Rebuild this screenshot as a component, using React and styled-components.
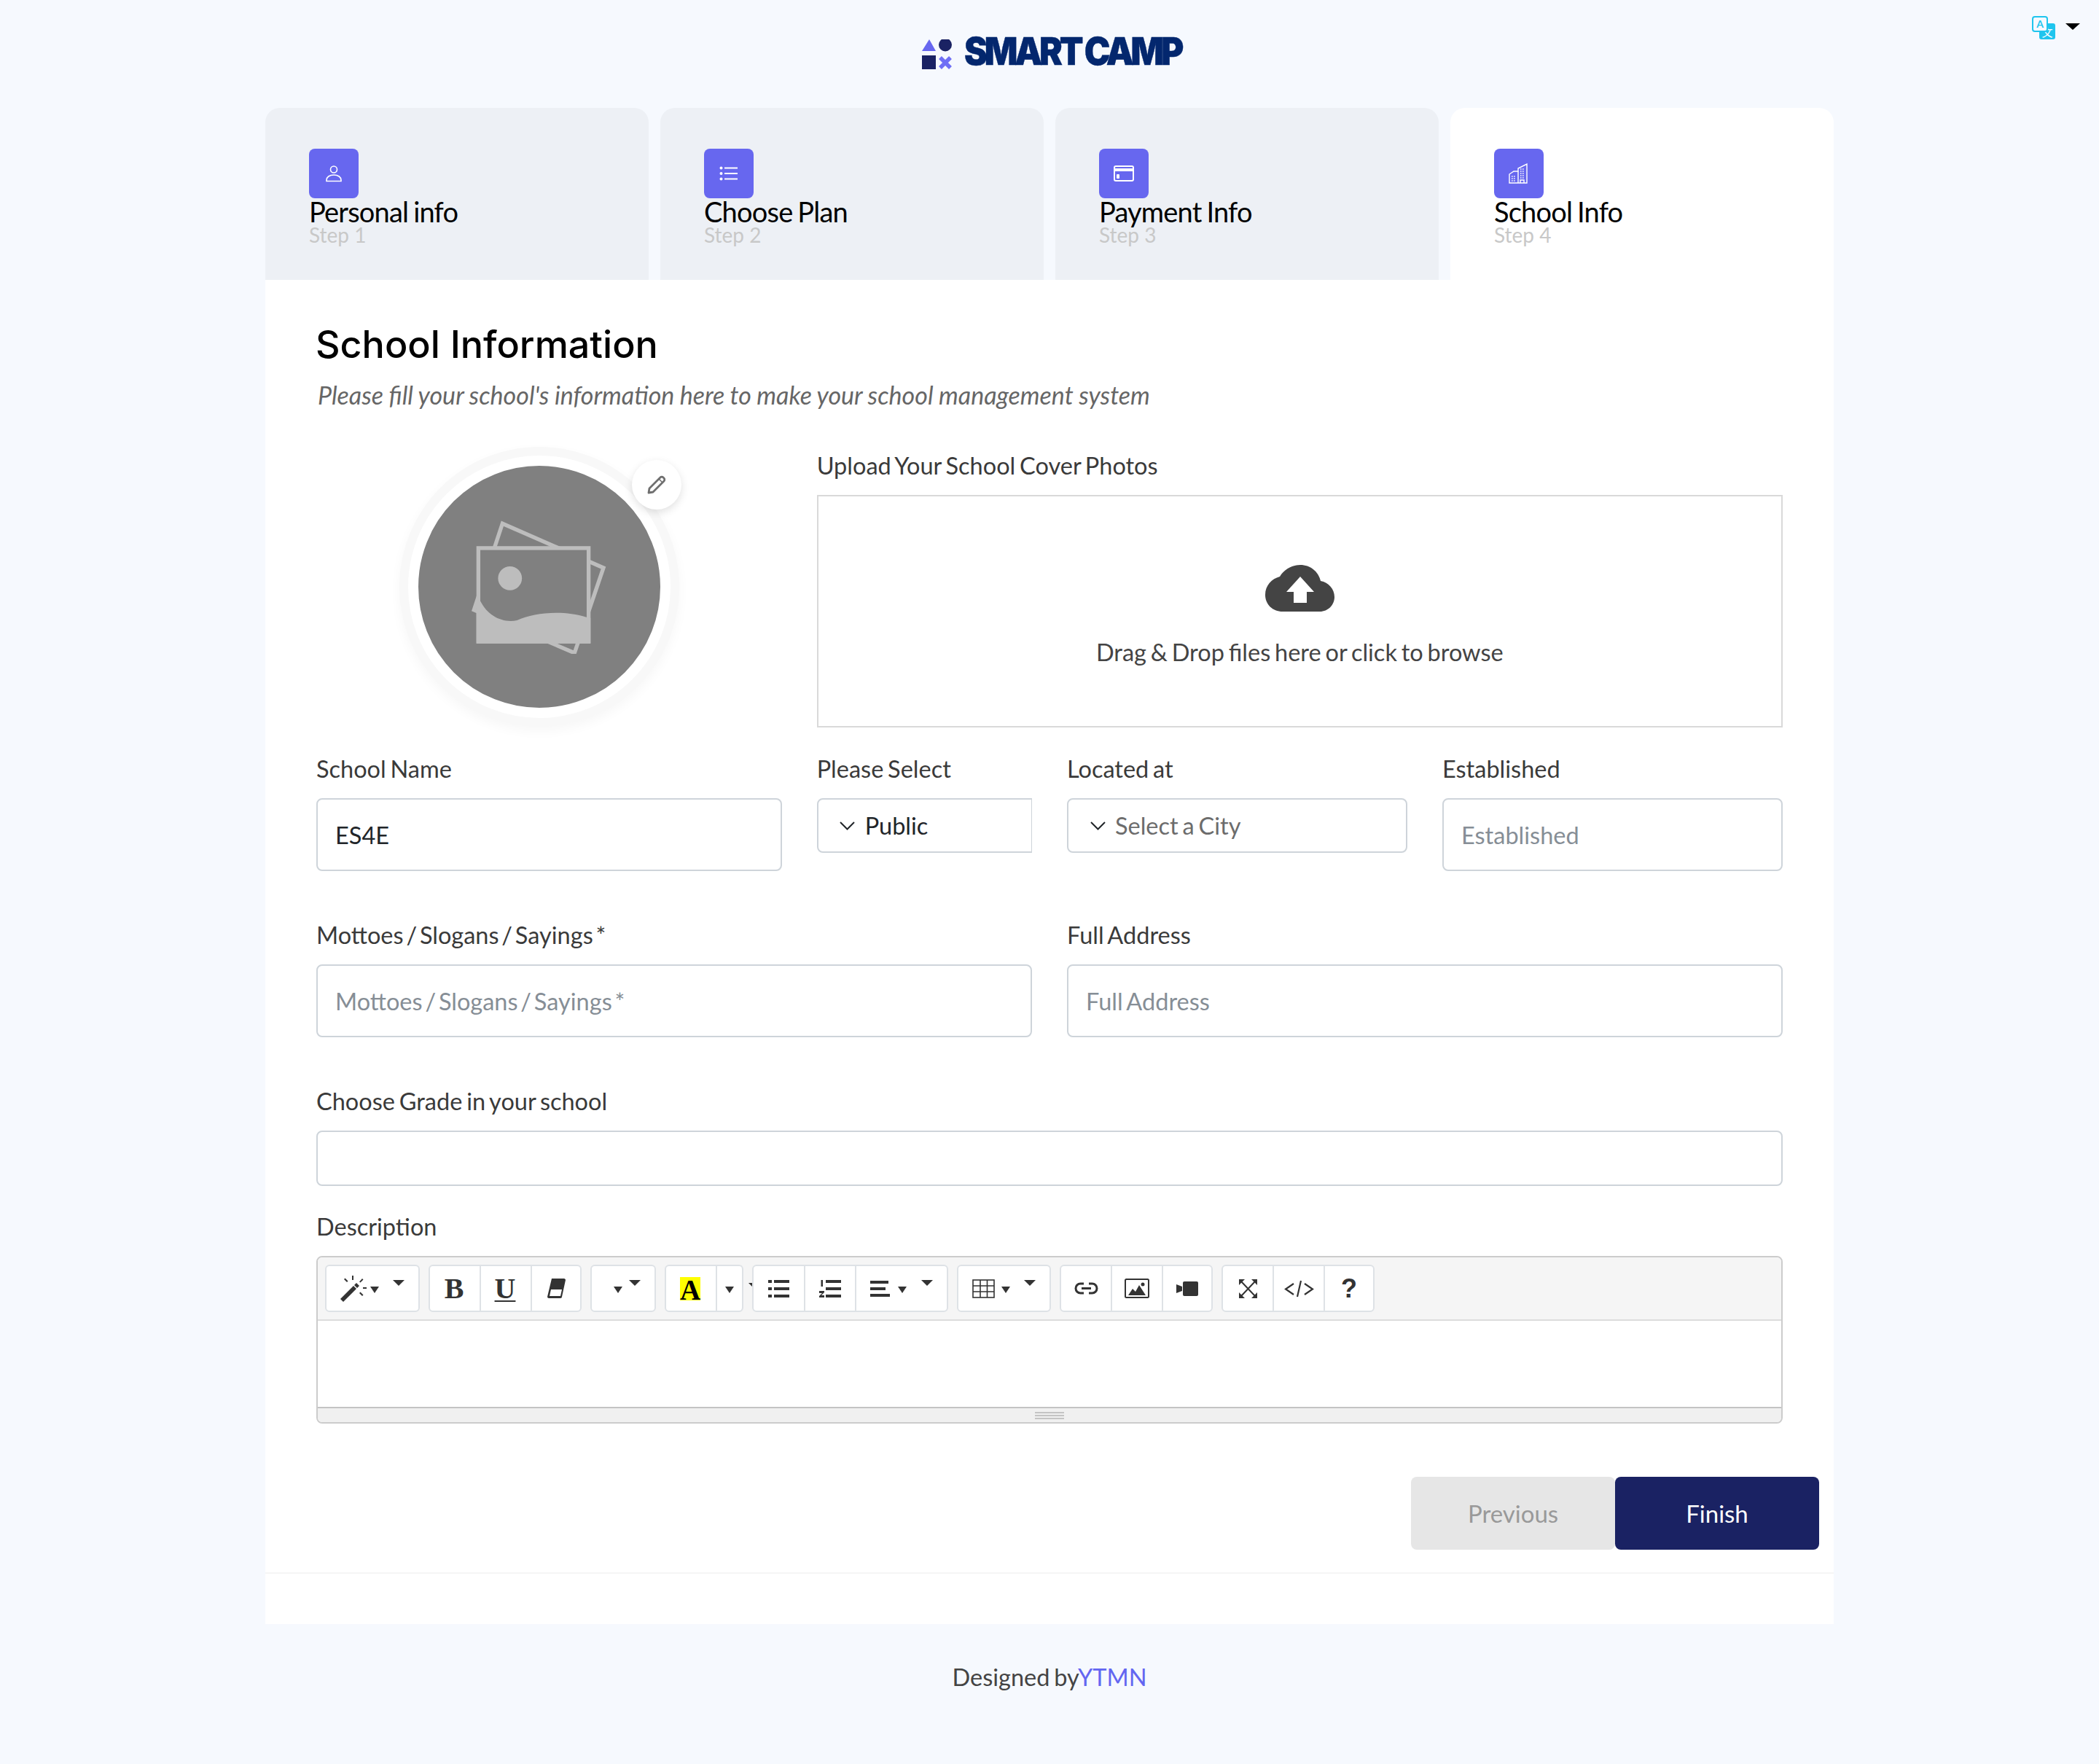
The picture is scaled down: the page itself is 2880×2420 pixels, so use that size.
import React from "react";
import styled, { createGlobalStyle } from "styled-components";

const Global = createGlobalStyle`
  html, body { margin: 0; padding: 0; background: #f6f9fe; }
  body { font-family: "Lato", "Liberation Sans", sans-serif; color: #333; }
  * { box-sizing: border-box; }
  input::placeholder { color: #868e96; opacity: 1; }
`;

const Page = styled.div`
  position: relative;
  width: 2880px;
  height: 2420px;
`;
const Header = styled.header`
  height: 148px;
  display: flex;
  justify-content: center;
  padding-top: 48px;
`;
const Logo = styled.div`
  display: flex;
  align-items: flex-start;
  gap: 16px;
`;
const LogoMark = styled.svg`
  width: 42px;
  height: 42px;
  margin-top: 6px;
`;
const LogoText = styled.span`
  font-family: "Inter", sans-serif;
  font-weight: 900;
  font-size: 52px;
  line-height: 46px;
  letter-spacing: -4.5px;
  color: #03276e;
  white-space: nowrap;
  transform: scaleX(0.918);
  transform-origin: left center;
  margin-right: -32px;
  -webkit-text-stroke: 0.4px #03276e;
`;
const LangSwitch = styled.div`
  position: absolute;
  top: 22px;
  right: 26px;
  display: flex;
  align-items: flex-start;
  gap: 14px;
`;
const LangCaret = styled.span`
  margin-top: 10px;
  border-left: 10px solid transparent;
  border-right: 10px solid transparent;
  border-top: 9px solid #000;
`;
const Shell = styled.main`
  width: 2152px;
  margin: 0 auto;
`;
const Tabs = styled.nav`
  display: grid;
  grid-template-columns: repeat(4, 1fr);
  gap: 16px;
`;
const Tab = styled.div`
  height: 236px;
  padding: 56px 0 0 60px;
  border-radius: 20px 20px 0 0;
  background: ${(p) => (p.$active ? "#fff" : "#edf0f5")};
`;
const TabIcon = styled.div`
  width: 68px;
  height: 68px;
  border-radius: 8px;
  background: #6767ef;
  display: flex;
  align-items: center;
  justify-content: center;
`;
const TabTitle = styled.div`
  font-size: 38px;
  line-height: 34px;
  margin-top: 1px;
  color: #000;
  letter-spacing: -0.8px;
  word-spacing: -2px;
`;
const TabStep = styled.div`
  font-size: 28px;
  line-height: 30px;
  color: #c8c8c8;
`;
const Card = styled.section`
  background: #fff;
  height: 1844px;
  padding-top: 61px;
`;
const FormBody = styled.div`
  padding: 0 70px;
`;
const Heading = styled.h1`
  margin: 0 0 0 -1px;
  font-family: "Inter", sans-serif;
  font-size: 52px;
  line-height: 56px;
  font-weight: 500;
  color: #000;
`;
const Sub = styled.p`
  margin: 19px 0 0;
  font-size: 34px;
  line-height: 44px;
  font-style: italic;
  color: #666;
  padding-left: 2px;
  word-spacing: -0.5px;
`;
const Row = styled.div`
  display: grid;
  grid-template-columns: repeat(12, 1fr);
  column-gap: 48px;
  margin-top: ${(p) => p.$top}px;
  align-items: start;
`;
const Col = styled.div`
  grid-column: span ${(p) => p.$span};
  min-width: 0;
`;
const Label = styled.label`
  display: block;
  font-size: 32.5px;
  word-spacing: ${(p) => (p.$tight ? -4.5 : -2.5)}px;
  line-height: 40px;
  margin-bottom: 20px;
  color: #3a3a3a;
  white-space: nowrap;
`;
const Input = styled.input`
  display: block;
  width: 100%;
  height: ${(p) => p.$h || 100}px;
  padding: 0 24px;
  border: 2px solid #ced4da;
  border-radius: 8px;
  background: #fff;
  font-family: inherit;
  font-size: 32.5px;
  word-spacing: ${(p) => (p.$tight ? -4.5 : -2.5)}px;
  color: #212529;
  outline: none;
`;
const Select = styled.div`
  height: 75px;
  display: flex;
  align-items: center;
  gap: ${(p) => (p.$muted ? 13 : 14)}px;
  padding-left: ${(p) => (p.$muted ? 30 : 29)}px;
  border: 2px solid #ced4da;
  border-right-width: ${(p) => (p.$clipped ? 1 : 2)}px;
  border-radius: ${(p) => (p.$clipped ? "8px 0 0 8px" : "8px")};
  font-size: 32.5px;
  word-spacing: -2.5px;
  color: ${(p) => (p.$muted ? "#6c6c6c" : "#212529")};
`;
const AvatarWrap = styled.div`
  display: flex;
  justify-content: center;
  padding-top: 7px;
  margin-left: -27px;
`;
const Avatar = styled.div`
  position: relative;
  width: 360px;
  height: 360px;
  margin-top: -1px;
  border-radius: 50%;
  background: #808080;
  border: 14px solid #fff;
  box-shadow: 0 0 0 12px #f8f8f8, 0 6px 16px 12px rgba(0, 0, 0, 0.035);
  display: flex;
  align-items: center;
  justify-content: center;
`;
const EditButton = styled.button`
  position: absolute;
  top: -8px;
  right: -29px;
  width: 68px;
  height: 68px;
  padding: 0;
  border: 0;
  border-radius: 50%;
  background: #fff;
  box-shadow: 0 4px 12px rgba(0, 0, 0, 0.12);
  display: flex;
  align-items: center;
  justify-content: center;
`;
const Drop = styled.div`
  height: 319px;
  border: 2px solid #d9d9d9;
  display: flex;
  flex-direction: column;
  align-items: center;
  padding-top: 94px;
`;
const DropText = styled.div`
  margin-top: 34px;
  font-size: 32.5px;
  word-spacing: -2.5px;
  line-height: 44px;
  color: #444;
`;
const Editor = styled.div`
  height: 230px;
  border: 2px solid #ccc;
  border-radius: 8px;
  overflow: hidden;
  display: flex;
  flex-direction: column;
`;
const Toolbar = styled.div`
  height: 87px;
  flex: none;
  background: #f5f5f5;
  border-bottom: 2px solid #dcdcdc;
  display: flex;
  gap: 12px;
  padding: 10px 0 0 10px;
  align-items: flex-start;
`;
const ToolGroup = styled.div`
  position: relative;
  z-index: ${(p) => p.$z || 0};
  height: 65px;
  display: flex;
  background: #fff;
  border: 2px solid #dee2e6;
  border-radius: 6px;
`;
const Tool = styled.div`
  width: ${(p) => p.$w}px;
  height: 100%;
  display: flex;
  align-items: center;
  justify-content: center;
  gap: ${(p) => p.$gap ?? 8}px;
  padding-left: ${(p) => p.$pl || 0}px;
  color: #333;
  & + & { border-left: 2px solid #dee2e6; }
`;
const SmallCaret = styled.span`
  flex: none;
  margin-top: 4px;
  margin-left: ${(p) => p.$ml || 0}px;
  border-left: 6.5px solid transparent;
  border-right: 6.5px solid transparent;
  border-top: 9px solid #333;
`;
const BigCaret = styled.span`
  flex: none;
  margin-bottom: 16px;
  margin-left: ${(p) => p.$ml || 0}px;
  border-left: 8.5px solid transparent;
  border-right: 8.5px solid transparent;
  border-top: 8px solid #333;
`;
const StrayCaret = styled(BigCaret)`
  position: absolute;
  top: 23px;
  right: -25px;
  margin: 0;
`;
const BoldLetter = styled.span`
  font-family: "Liberation Serif", serif;
  font-weight: 700;
  font-size: 40px;
  line-height: 1;
  color: #333;
  margin-right: 2px;
  text-decoration: ${(p) => (p.$underline ? "underline" : "none")};
  text-decoration-thickness: 2px;
  text-underline-offset: 3px;
`;
const Highlight = styled.span`
  width: 28px;
  height: 32px;
  margin-right: 2px;
  background: #ff0;
  font-family: "Liberation Serif", serif;
  font-weight: 700;
  font-size: 39px;
  line-height: 36px;
  color: #000;
  display: flex;
  justify-content: center;
`;
const Help = styled.span`
  font-family: "Liberation Sans", sans-serif;
  font-weight: 700;
  font-size: 36px;
  color: #333;
`;
const EditArea = styled.div`
  flex: 1;
  background: #fff;
`;
const Status = styled.div`
  height: 21px;
  flex: none;
  background: #f0f0f0;
  border-top: 2px solid #c4c4c4;
  display: flex;
  align-items: center;
  justify-content: center;
`;
const Grip = styled.div`
  width: 40px;
  height: 10px;
  border-top: 2px solid #c4c4c4;
  border-bottom: 2px solid #c4c4c4;
  position: relative;
  &::after {
    content: "";
    position: absolute;
    left: 0;
    right: 0;
    top: 2px;
    height: 2px;
    background: #c4c4c4;
  }
`;
const Actions = styled.div`
  display: flex;
  justify-content: flex-end;
  margin-top: 73px;
  padding-right: 20px;
`;
const ActionButton = styled.button`
  width: 280px;
  height: 100px;
  border: 0;
  border-radius: 8px;
  font-family: inherit;
  font-size: 33px;
  background: ${(p) => (p.$primary ? "#1a2263" : "#e6e6e6")};
  color: ${(p) => (p.$primary ? "#fff" : "#999")};
`;
const CardFoot = styled.div`
  margin-top: 31px;
  border-top: 2px solid #f5f5f5;
`;
const Footer = styled.footer`
  margin-top: 50px;
  text-align: center;
  font-size: 32.5px;
  word-spacing: -2.5px;
  line-height: 46px;
  color: #444;
`;
const FooterLink = styled.span`
  color: #6366f1;
`;

const StepPerson = () => (
  <svg width="24" height="24" viewBox="0 0 24 24" fill="none" stroke="#fff" strokeWidth="1.6">
    <circle cx="12" cy="6.500" r="4.500" />
    <path d="M2 22.500v-1.500c0-4 4-7 10-7s10 3 10 7v1.500z" />
  </svg>
);
const StepList = () => (
  <svg width="26" height="20" viewBox="0 0 26 20" fill="#fff">
    <circle cx="2.500" cy="2.500" r="2" /><circle cx="2.500" cy="10" r="2" /><circle cx="2.500" cy="17.500" r="2" />
    <rect x="7" y="1.500" width="18" height="2" /><rect x="7" y="9" width="18" height="2" /><rect x="7" y="16.500" width="18" height="2" />
  </svg>
);
const StepCard = () => (
  <svg width="28" height="22" viewBox="0 0 28 22" fill="none">
    <rect x="1" y="1" width="26" height="20" rx="2" stroke="#fff" strokeWidth="2" />
    <rect x="1" y="4" width="26" height="4" fill="#fff" />
    <rect x="4" y="12" width="4" height="6" rx="1" fill="#fff" />
  </svg>
);
const StepBuilding = () => (
  <svg width="28" height="28" viewBox="0 0 28 28" fill="none" stroke="#fff" strokeWidth="1.4">
    <path d="M1 27V15l6-4h6V7l12-6v26z" />
    <path d="M4 18h6M4 21h6M4 24h6M16 8h6M16 11h6M16 14h6M16 17h6M16 20h6" strokeDasharray="1.6 1.4" />
    <path d="M13 27V11M16 27v-4h5v4" />
  </svg>
);
const Chevron = () => (
  <svg width="21" height="12" viewBox="0 0 21 12" fill="none" stroke="#212529" strokeWidth="2">
    <path d="M1 1l9.500 9.500L20 1" />
  </svg>
);
const Cloud = () => (
  <svg width="95" height="64" viewBox="0 0 95 64">
    <path fill="#444" d="M24 64C10 64 0 54 0 41C0 28 9 19 20 16C26 6 37 0 48 0C62 0 73 9 76 22C87 24 95 33 95 44C95 55 86 64 75 64Z" />
    <path fill="#fff" d="M48 16L67 37H57V52H39V37H29Z" />
  </svg>
);
const PlaceholderImage = () => (
  <svg width="187" height="184" viewBox="380 365 560 550" fill="none">
    <path d="M510 380L925 562L806 912L393 735Z" stroke="#bdbdbd" strokeWidth="16" />
    <rect x="411" y="481" width="453" height="384" fill="#808080" stroke="#bdbdbd" strokeWidth="16" />
    <circle cx="541" cy="605" r="49" fill="#bdbdbd" />
    <path fill="#bdbdbd" d="M403 690L420 700C450 760 510 790 570 778C640 745 760 735 855 765L872 768V873H403Z" />
  </svg>
);
const Pencil = () => (
  <svg width="26" height="26" viewBox="0 0 26 26" fill="none" stroke="#6f6f6f" strokeWidth="2.800" strokeLinejoin="round">
    <path d="M3 18L18 3c1-1 3-1 4 0l1 1c1 1 1 3 0 4L8 23l-6 1z" />
    <path d="M16 5l5 5" strokeWidth="1.600" />
  </svg>
);
const Magic = () => (
  <svg width="36" height="36" viewBox="0 0 36 36" fill="#333">
    <path d="M0 32L18 14l4 4L4 36zM19 13l3-3 4 4-3 3z" />
    <rect x="16" y="0" width="2" height="6" />
    <path d="M5 5l1.500-1.500 4 4L9 9zM26 8.500L30 4l1.500 1.500-4 4zM26 24l1.500-1.500 4 4L30 28z" />
    <rect x="31" y="16" width="5" height="2" />
  </svg>
);
const Eraser = () => (
  <svg width="25" height="27" viewBox="0 0 25 27">
    <path fill="#333" d="M6 0h17c1 0 2 1 2 2l-5 23c0 1-1 2-2 2H2c-1 0-2-1-2-2z" />
    <path fill="#fff" d="M5 15h15l-2 9H3z" />
  </svg>
);
const Ul = () => (
  <svg width="29" height="24" viewBox="0 0 29 24" fill="#333">
    <rect width="5" height="4" /><rect y="10" width="5" height="4" /><rect y="20" width="5" height="4" />
    <rect x="8" width="21" height="4" /><rect x="8" y="10" width="21" height="4" /><rect x="8" y="20" width="21" height="4" />
  </svg>
);
const Ol = () => (
  <svg width="30" height="24" viewBox="0 0 30 24" fill="#333">
    <rect x="2.500" y="0" width="2.500" height="9" /><path d="M0 15h7v2l-4 4h4v3H0v-2l4-4H0z" />
    <rect x="9" width="21" height="4" /><rect x="9" y="10" width="21" height="4" /><rect x="9" y="20" width="21" height="4" />
  </svg>
);
const Align = () => (
  <svg width="27" height="22" viewBox="0 0 27 22" fill="#333">
    <rect width="25" height="4" /><rect y="9" width="21" height="4" /><rect y="18" width="27" height="4" />
  </svg>
);
const TableIcon = () => (
  <svg width="31" height="26" viewBox="0 0 31 26" fill="none" stroke="#333" strokeWidth="1.600">
    <rect x="1" y="1" width="29" height="24" />
    <path d="M11 1v24M20.500 1v24M1 9h29M1 17h29" />
  </svg>
);
const LinkIcon = () => (
  <svg width="33" height="17" viewBox="0 0 33 17" fill="none" stroke="#333" strokeWidth="3">
    <path d="M13 2H8.500a6.500 6.500 0 0 0 0 13H13M20 2h4.500a6.500 6.500 0 0 1 0 13H20M10 8.500h13" />
  </svg>
);
const Picture = () => (
  <svg width="34" height="27" viewBox="0 0 34 27">
    <rect x="1" y="1" width="32" height="25" rx="1.500" fill="none" stroke="#333" strokeWidth="2" />
    <path fill="#333" d="M5 23l6-9 4 4 5-9 9 14z" />
    <circle cx="25" cy="8" r="2.500" fill="#333" />
  </svg>
);
const Video = () => (
  <svg width="30" height="20" viewBox="0 0 30 20" fill="#333">
    <rect x="9" y="0" width="21" height="20" rx="2" /><path d="M0 4l8 3v6l-8 3z" />
  </svg>
);
const Full = () => (
  <svg width="25" height="26" viewBox="0 0 25 26" fill="#333">
    <path d="M0 0h8L0 8zM25 0h-8l8 8zM0 26h8L0 18zM25 26h-8l8-8z" />
    <path d="M3 3l19 20M22 3L3 23" stroke="#333" strokeWidth="2" fill="none" />
  </svg>
);
const Code = () => (
  <svg width="41" height="24" viewBox="0 0 41 24" fill="none" stroke="#333" strokeWidth="2.200">
    <path d="M13 5L2 12.500 13 20M28 5l11 7.500L28 20M23 1l-5 22" />
  </svg>
);

const steps = [
  ["Personal info", "Step 1", <StepPerson />],
  ["Choose Plan", "Step 2", <StepList />],
  ["Payment Info", "Step 3", <StepCard />],
  ["School Info", "Step 4", <StepBuilding />],
];

export default function App() {
  return (
    <Page>
      <Global />
      <Header>
        <Logo>
          <LogoMark viewBox="0 0 42 42">
            <path d="M10 0L19 16H0Z" fill="#6767ef" />
            <circle cx="32" cy="7.500" r="9" fill="#1a2263" />
            <rect x="0" y="22" width="19" height="19" fill="#1a2263" />
            <path d="M25 25l14 14M39 25L25 39" stroke="#6f6ff5" strokeWidth="5.500" />
          </LogoMark>
          <LogoText>SMART CAMP</LogoText>
        </Logo>
        <LangSwitch>
          <svg width="32" height="32" viewBox="0 0 32 32">
            <rect x="10" y="10" width="22" height="22" rx="3" fill="#1fc5ee" />
            <text x="21" y="28" fontSize="15" fill="#fff" textAnchor="middle" fontFamily="Noto Sans CJK SC">文</text>
            <rect x="1" y="1" width="20" height="20" rx="3" fill="#f6f9fe" stroke="#1fc5ee" strokeWidth="2" />
            <text x="11" y="16" fontSize="14" fontWeight="700" fill="#1fc5ee" textAnchor="middle" fontFamily="Lato">A</text>
          </svg>
          <LangCaret />
        </LangSwitch>
      </Header>
      <Shell>
        <Tabs>
          {steps.map(([title, step, icon], i) => (
            <Tab key={title} $active={i === 3}>
              <TabIcon>{icon}</TabIcon>
              <TabTitle>{title}</TabTitle>
              <TabStep>{step}</TabStep>
            </Tab>
          ))}
        </Tabs>
        <Card>
          <FormBody>
            <Heading>School Information</Heading>
            <Sub>Please fill your school's information here to make your school management system</Sub>
            <Row $top={55}>
              <Col $span={4}>
                <AvatarWrap>
                  <Avatar>
                    <PlaceholderImage />
                    <EditButton aria-label="Edit"><Pencil /></EditButton>
                  </Avatar>
                </AvatarWrap>
              </Col>
              <Col $span={8}>
                <Label>Upload Your School Cover Photos</Label>
                <Drop>
                  <Cloud />
                  <DropText>Drag &amp; Drop files here or click to browse</DropText>
                </Drop>
              </Col>
            </Row>
            <Row $top={37}>
              <Col $span={4}>
                <Label>School Name</Label>
                <Input defaultValue="ES4E" />
              </Col>
              <Col $span={2}>
                <Label>Please Select</Label>
                <Select $clipped><Chevron />Public</Select>
              </Col>
              <Col $span={3}>
                <Label>Located at</Label>
                <Select $muted><Chevron />Select a City</Select>
              </Col>
              <Col $span={3}>
                <Label>Established</Label>
                <Input placeholder="Established" />
              </Col>
            </Row>
            <Row $top={68}>
              <Col $span={6}>
                <Label $tight>Mottoes / Slogans / Sayings *</Label>
                <Input $tight placeholder="Mottoes / Slogans / Sayings *" />
              </Col>
              <Col $span={6}>
                <Label>Full Address</Label>
                <Input placeholder="Full Address" />
              </Col>
            </Row>
            <Row $top={68}>
              <Col $span={12}>
                <Label>Choose Grade in your school</Label>
                <Input $h={76} />
              </Col>
            </Row>
            <Row $top={36}>
              <Col $span={12}>
                <Label>Description</Label>
                <Editor>
                  <Toolbar>
                    <ToolGroup>
                      <Tool $w={126} $gap={5}><Magic /><SmallCaret /><BigCaret $ml={14} /></Tool>
                    </ToolGroup>
                    <ToolGroup>
                      <Tool $w={68}><BoldLetter>B</BoldLetter></Tool>
                      <Tool $w={70}><BoldLetter $underline>U</BoldLetter></Tool>
                      <Tool $w={68}><Eraser /></Tool>
                    </ToolGroup>
                    <ToolGroup>
                      <Tool $w={86} $gap={9} $pl={10}><SmallCaret /><BigCaret /></Tool>
                    </ToolGroup>
                    <ToolGroup>
                      <Tool $w={68}><Highlight>A</Highlight></Tool>
                      <Tool $w={36}><SmallCaret /></Tool>
                      <StrayCaret />
                    </ToolGroup>
                    <ToolGroup $z={1}>
                      <Tool $w={69}><Ul /></Tool>
                      <Tool $w={70}><Ol /></Tool>
                      <Tool $w={126} $gap={11}><Align /><SmallCaret /><BigCaret $ml={9} /></Tool>
                    </ToolGroup>
                    <ToolGroup>
                      <Tool $w={125} $gap={9}><TableIcon /><SmallCaret /><BigCaret $ml={10} /></Tool>
                    </ToolGroup>
                    <ToolGroup>
                      <Tool $w={68}><LinkIcon /></Tool>
                      <Tool $w={70}><Picture /></Tool>
                      <Tool $w={68}><Video /></Tool>
                    </ToolGroup>
                    <ToolGroup>
                      <Tool $w={68}><Full /></Tool>
                      <Tool $w={70}><Code /></Tool>
                      <Tool $w={68}><Help>?</Help></Tool>
                    </ToolGroup>
                  </Toolbar>
                  <EditArea />
                  <Status><Grip /></Status>
                </Editor>
              </Col>
            </Row>
          </FormBody>
          <Actions>
            <ActionButton>Previous</ActionButton>
            <ActionButton $primary>Finish</ActionButton>
          </Actions>
          <CardFoot />
        </Card>
        <Footer>Designed by<FooterLink>YTMN</FooterLink></Footer>
      </Shell>
    </Page>
  );
}
